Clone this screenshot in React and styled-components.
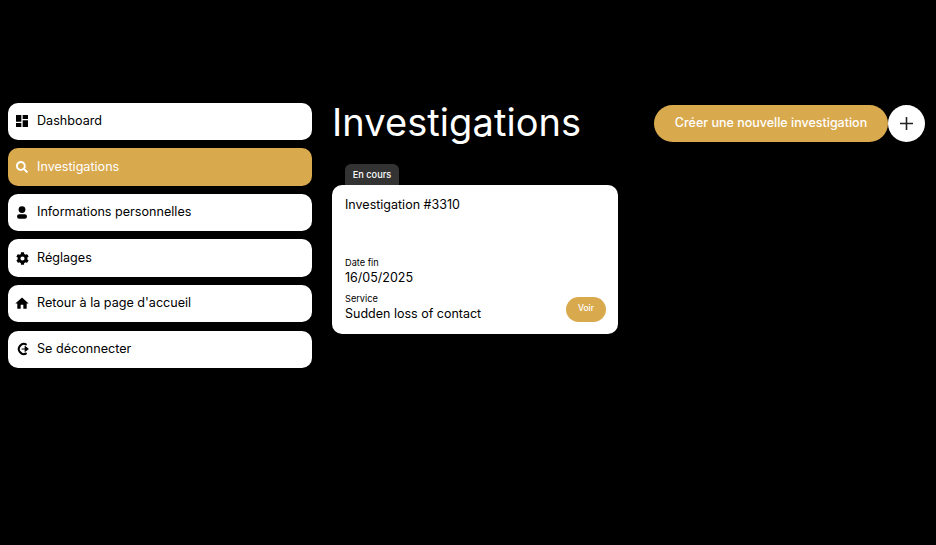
import React from 'react';
import styled, { createGlobalStyle } from 'styled-components';
import { MdDashboard, MdHome } from 'react-icons/md';
import { FaSearch, FaCog } from 'react-icons/fa';

const GlobalStyle = createGlobalStyle`
  html, body {
    margin: 0;
    padding: 0;
    background: #000;
    font-family: Inter, "Noto Sans", sans-serif;
  }
`;

const gold = '#d9a94e';

const Page = styled.div`
  display: flex;
  align-items: flex-start;
  gap: 20px;
  min-height: 545px;
  box-sizing: border-box;
  padding: 102.6px 11px 0 8px;
`;

const Sidebar = styled.nav`
  display: flex;
  flex-direction: column;
  gap: 8.22px;
  width: 304px;
  flex: none;
`;

const NavItem = styled.a`
  display: flex;
  align-items: center;
  gap: 7px;
  height: 37.4px;
  box-sizing: border-box;
  padding: 0 6px;
  border-radius: 10px;
  background: ${p => (p.$active ? gold : '#fff')};
  color: ${p => (p.$active ? '#fff' : '#000')};
  font-size: 12.6px;
`;

const NavIcon = styled.span`
  display: flex;
  align-items: center;
  justify-content: center;
  flex: none;
  width: 16px;
  height: 16px;
`;

const NavLabel = styled.span`
  margin-top: -1.5px;
`;

const Main = styled.main`
  flex: 1;
  min-width: 0;
  margin-top: 0.4px;
`;

const Header = styled.header`
  display: flex;
  align-items: center;
  justify-content: space-between;
  height: 39px;
`;

const Title = styled.h1`
  margin: 0;
  font-size: 38px;
  font-weight: 400;
  color: #fff;
  letter-spacing: 0.08px;
`;

const Actions = styled.div`
  display: flex;
  align-items: center;
  margin-top: 2px;
`;

const CreateButton = styled.button`
  width: 234px;
  height: 37px;
  padding: 0 0 1px;
  border: 0;
  border-radius: 19px;
  background: ${gold};
  color: #fff;
  font: 500 12.5px Inter, sans-serif;
`;

const PlusButton = styled.button`
  display: flex;
  align-items: center;
  justify-content: center;
  width: 37px;
  height: 37px;
  padding: 0;
  border: 0;
  border-radius: 50%;
  background: #fff;
`;

const CardWrap = styled.div`
  width: 286px;
  margin-top: 22px;
`;

const Tag = styled.div`
  display: flex;
  align-items: center;
  justify-content: center;
  width: 54px;
  height: 21px;
  margin-left: 13px;
  border-radius: 6px 6px 0 0;
  background: #333;
  color: #fff;
  font-size: 9.2px;
  font-weight: 500;
`;

const Card = styled.article`
  position: relative;
  box-sizing: border-box;
  height: 149px;
  padding: 11px 13px;
  border-radius: 10px;
  background: #fff;
  color: #000;
`;

const CardTitle = styled.div`
  font-size: 12.5px;
  line-height: 18px;
  height: 61px;
`;

const Label = styled.div`
  font-size: 9.2px;
  line-height: 12px;
`;

const Value = styled.div`
  font-size: 12.5px;
  line-height: 18px;
  margin-bottom: 6px;
`;

const SeeButton = styled.button`
  position: absolute;
  right: 12px;
  bottom: 12px;
  width: 40px;
  height: 25px;
  padding: 0 0 2px;
  border: 0;
  border-radius: 13px;
  background: ${gold};
  color: #fff;
  font: 500 8.5px Inter, sans-serif;
`;

const UserIcon = () => (
  <svg width="16" height="16" viewBox="0 0 16 16" fill="currentColor">
    <circle cx="8" cy="4.6" r="3.4" />
    <rect x="3" y="9.2" width="10" height="4.6" rx="2.3" />
  </svg>
);

const LogoutIcon = () => (
  <svg width="16" height="16" viewBox="0 0 16 16" fill="none">
    <path d="M12.6 3.8A5 5 0 1 0 12.6 12.2" stroke="currentColor" strokeWidth="2" />
    <path d="M7.6 8H12M11.2 5.8L14 8L11.2 10.2Z" stroke="currentColor" strokeWidth="1.1" fill="currentColor" />
  </svg>
);

const PlusIcon = () => (
  <svg width="13" height="13" viewBox="0 0 13 13">
    <path d="M6.5 0V13M0 6.5H13" stroke="#222" strokeWidth="1.6" />
  </svg>
);

const navItems = [
  { label: 'Dashboard', icon: <MdDashboard size={16} /> },
  { label: 'Investigations', icon: <FaSearch size={12} />, active: true },
  { label: 'Informations personnelles', icon: <UserIcon /> },
  { label: 'Réglages', icon: <FaCog size={13} /> },
  { label: "Retour à la page d'accueil", icon: <MdHome size={17} /> },
  { label: 'Se déconnecter', icon: <LogoutIcon /> },
];

export default function App() {
  return (
    <>
      <GlobalStyle />
      <Page>
        <Sidebar>
          {navItems.map(item => (
            <NavItem key={item.label} $active={item.active}>
              <NavIcon>{item.icon}</NavIcon>
              <NavLabel>{item.label}</NavLabel>
            </NavItem>
          ))}
        </Sidebar>
        <Main>
          <Header>
            <Title>Investigations</Title>
            <Actions>
              <CreateButton>Créer une nouvelle investigation</CreateButton>
              <PlusButton><PlusIcon /></PlusButton>
            </Actions>
          </Header>
          <CardWrap>
            <Tag>En cours</Tag>
            <Card>
              <CardTitle>Investigation #3310</CardTitle>
              <Label>Date fin</Label>
              <Value>16/05/2025</Value>
              <Label>Service</Label>
              <Value>Sudden loss of contact</Value>
              <SeeButton>Voir</SeeButton>
            </Card>
          </CardWrap>
        </Main>
      </Page>
    </>
  );
}
